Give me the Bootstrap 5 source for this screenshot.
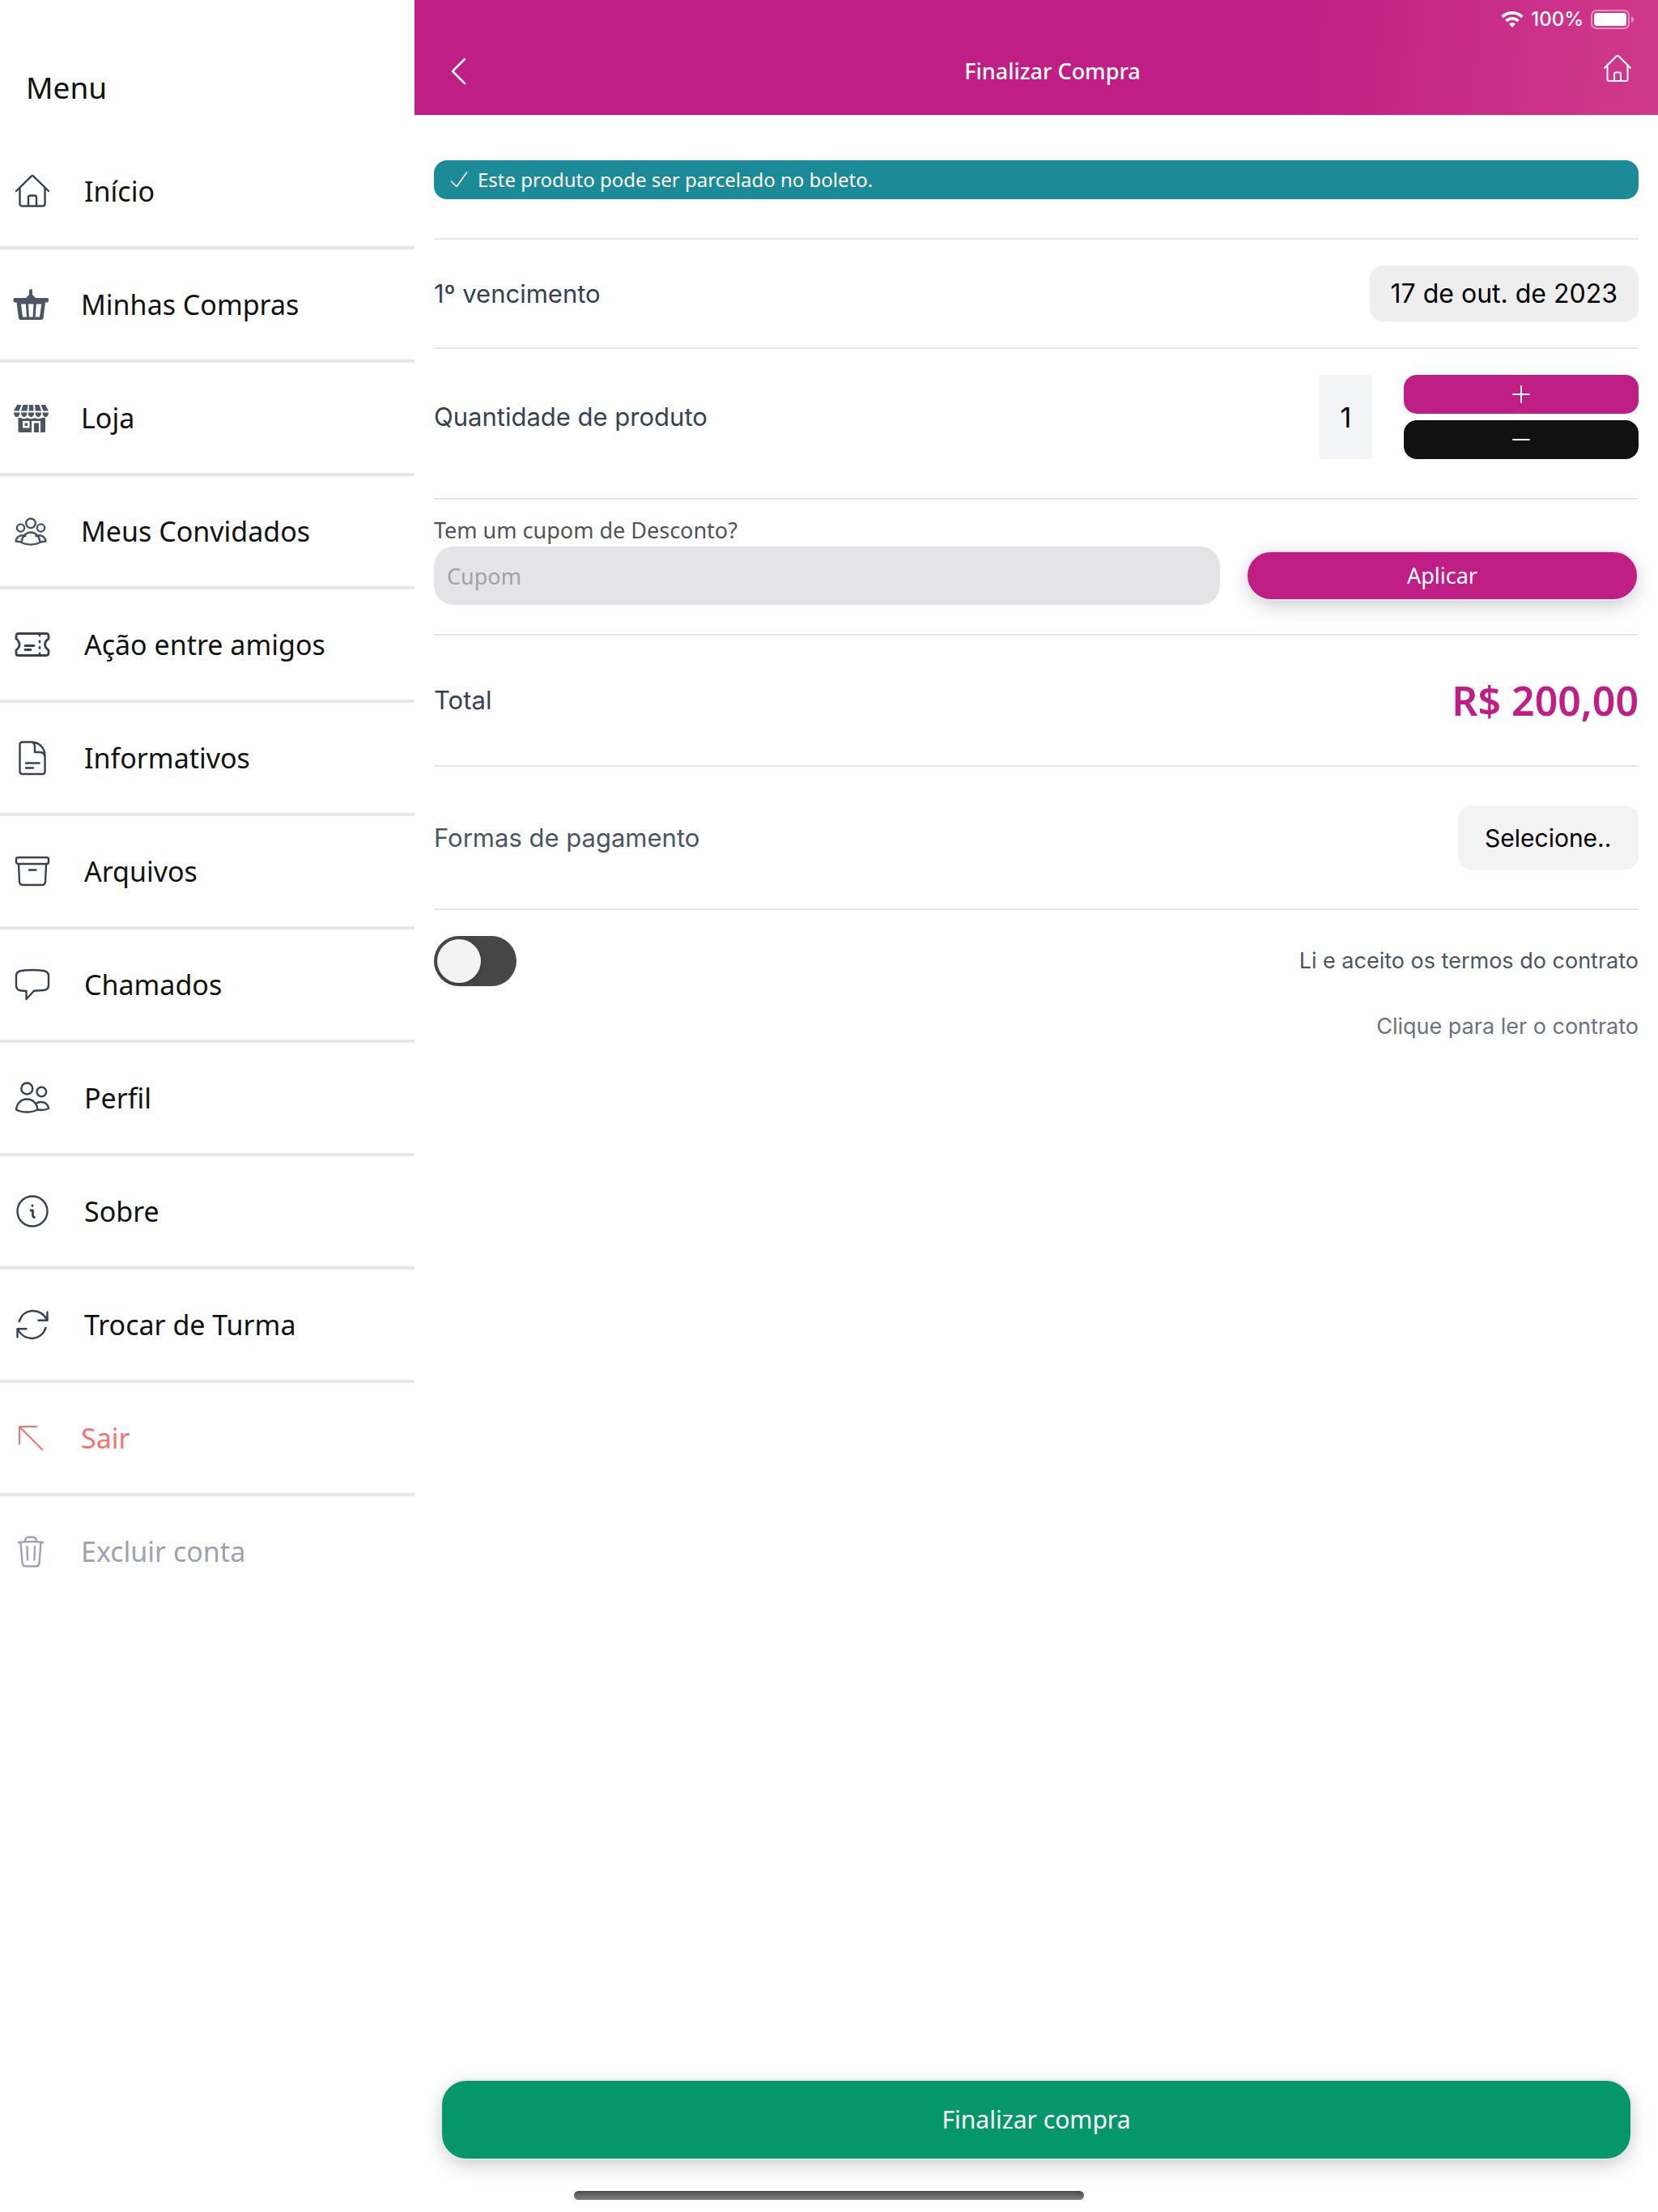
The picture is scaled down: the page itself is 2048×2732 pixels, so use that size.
<!DOCTYPE html>
<html lang="pt-BR">
<head>
<meta charset="utf-8">
<meta name="viewport" content="width=device-width, initial-scale=1">
<title>Finalizar Compra</title>
<link rel="stylesheet" href="https://cdn.jsdelivr.net/npm/bootstrap@5.3.0/dist/css/bootstrap.min.css">
<style>
:root { --brand: #bf1e85; --line: #e5e7eb; --rounded-font: "Noto Sans", sans-serif; --ui-font: Inter, "Liberation Sans", sans-serif; }
body { font-family: var(--ui-font); color: #374151; background: #fff; font-size: 31px; line-height: 44px; }
svg { fill: none; stroke: currentColor; stroke-width: 2; stroke-linecap: round; stroke-linejoin: round; flex-shrink: 0; display: block; }
.solid { fill: currentColor; stroke: none; }

/* Side menu */
.side-menu { width: 25%; font-family: var(--rounded-font); color: #111; }
.side-title { font-size: 37px; line-height: 52px; font-weight: 400; margin: 0; padding: 82px 32px 34px; }
.menu-link { height: 140px; padding: 0 18px 4px; gap: 42px; font-size: 34px; color: #111; text-decoration: none; }
.menu-link svg { width: 44px; height: 44px; color: #374151; stroke-width: 2.4; }
.menu-link.alt { padding-left: 16px; gap: 40px; }
.menu-link.alt svg { color: #4b5563; }
.menu-item:not(:last-child) .menu-link { border-bottom: 4px solid var(--line); padding-bottom: 0; }
.menu-link.leave, .menu-link.alt.leave svg { color: #f87171; }
.menu-link.remove, .menu-link.alt.remove svg { color: #9ca3af; }

/* Header */
.top-bar { height: 142px; color: #fff; background: linear-gradient(95deg, var(--brand) 69%, #d03a8a); }
.status-line { height: 48px; padding: 0 29px; gap: 9px; font-size: 24px; line-height: 24px; font-weight: 500; }
.nav-line { height: 80px; padding: 0 32px 0 44px; }
.nav-line h1 { font-family: var(--rounded-font); font-size: 27px; line-height: 36px; font-weight: 500; margin: 0; }
.icon-btn { background: none; border: 0; color: inherit; padding: 0; }

/* Content */
.notice { margin: 56px 24px 48px; height: 48px; border-radius: 16px; padding: 0 20px; gap: 12px; background: #1c8a97; color: #fff; font-family: var(--rounded-font); font-size: 24px; }
.form-line { margin: 0 24px; border-top: 2px solid var(--line); }
.chip { background: #eee; color: #000; border: 0; border-radius: 16px; }
.date-line { padding: 32px 0; }
.date-chip { height: 69px; padding: 0 26px; font-size: 32px; }
.qty-line { padding: 32px 0 48px; }
.qty-box { width: 65px; height: 104px; border: 0; background: #f3f4f6; color: #000; text-align: center; font-size: 34px; padding: 0; margin-right: 39px; }
.step-btns { width: 290px; }
.step-btn { height: 48px; border: 0; border-radius: 16px; color: #fff; background: var(--brand); }
.step-btn.minus { background: #111; }
.coupon-line { padding: 20px 0 36px; }
.coupon-row { gap: 32px; }
.coupon-label { font-size: 27px; line-height: 36px; color: #52525b; font-family: var(--rounded-font); margin-bottom: 2px; }
.coupon-box { height: 72px; border: 0; border-radius: 24px; background: #e4e4e6; padding: 0 16px; font-size: 27px; font-family: var(--rounded-font); color: #111; min-width: 0; }
.coupon-box::placeholder { color: #a1a1aa; }
.raised { border: 2px solid var(--line); color: #fff; font-family: var(--rounded-font); box-shadow: 0 10px 30px -6px rgba(0,0,0,.2), 0 0 20px rgba(0,0,0,.06); }
.apply-btn { width: 485px; height: 62px; border-radius: 31px; background: var(--brand); font-size: 27px; line-height: 36px; }
.total-line { padding: 50px 0; }
.price { color: var(--brand); font-family: var(--rounded-font); font-size: 50px; line-height: 60px; font-weight: 600; }
.pay-select { height: 79px; padding: 0 33px; background: #f3f3f3; font-size: 30px; appearance: none; }
.soft { color: #4b5563; }
.terms-line { padding: 32px 0; }
.terms-label { font-size: 27px; line-height: 36px; color: #4b5563; }
.terms-link { font-size: 27px; line-height: 36px; color: #6b7280; text-decoration: none; margin-right: 24px; }
.switch-box { appearance: none; width: 102px; height: 62px; border-radius: 31px; background: #474748; margin: 0; display: flex; align-items: center; padding: 0 4px; }
.switch-box::before { content: ""; width: 54px; height: 54px; border-radius: 50%; background: #f2f2f2; box-shadow: 0 4px 8px rgba(0,0,0,.15); }
.switch-box:checked { background: var(--brand); justify-content: flex-end; }
.finish-wrap { padding: 0 32px 64px; }
.finish-btn { height: 100px; border-radius: 32px; background: #059669; font-size: 30px; line-height: 44px; }
.home-bar { position: absolute; left: 50%; bottom: 15px; transform: translateX(-50%); width: 630px; max-width: 60%; height: 11px; border-radius: 6px; background: linear-gradient(#4b4b4b, #808080); }
</style>
</head>
<body>
<div class="d-flex min-vh-100 position-relative">
  <nav class="side-menu flex-shrink-0" aria-label="Menu">
    <h2 class="side-title">Menu</h2>
    <ul class="list-unstyled m-0">
      <li class="menu-item"><a href="#" class="menu-link d-flex align-items-center">
        <svg viewBox="0 0 44 44"><path d="M2 22 20.500 3.800a2.200 2.200 0 0 1 3 0L42 22M6.500 18v20a2.500 2.500 0 0 0 2.500 2.500h26a2.500 2.500 0 0 0 2.500-2.500V18M17 40V30a2.500 2.500 0 0 1 2.500-2.500h5A2.500 2.500 0 0 1 27 30v10"/></svg>Início</a></li>
      <li class="menu-item"><a href="#" class="menu-link alt d-flex align-items-center">
        <svg viewBox="0 0 44 44"><path class="solid" fill-rule="evenodd" d="M20 5a2 2 0 0 1 4 0v5l4 4h14.500a1.500 1.500 0 0 1 1.500 1.500v2a2 2 0 0 1-2 2h-2L37.500 39a2.500 2.500 0 0 1-2.500 2H9.500A2.500 2.500 0 0 1 7 39L4.500 19.500h-2a2 2 0 0 1-2-2v-2A1.500 1.500 0 0 1 2 14h14l4-4zM10 21.500l2 16h5l-1.200-16zM19 21.500l1 16h4.500l1-16zM28.800 21.500l-1.200 16H33l2.200-16z"/></svg>Minhas Compras</a></li>
      <li class="menu-item"><a href="#" class="menu-link alt d-flex align-items-center">
        <svg viewBox="0 0 44 44"><g class="solid"><path d="M5 6h5.500L7.500 13.500H1zM12.500 6h6l-1 7.500h-7.500zM20 6h5l.5 7.500h-6zM27 6h5.500l2.500 7.500h-7.200zM34.500 6H40l4 7.500h-6.500zM1 15.500h7.500a3.700 5.500 0 0 1-7.500 0zM10 15.500h7.500a3.700 5.500 0 0 1-7.500 0zM18.700 15.500h7.500a3.700 5.500 0 0 1-7.500 0zM27.500 15.500h7.500a3.700 5.500 0 0 1-7.500 0zM36.500 15.500H44a3.700 5.500 0 0 1-7.500 0z"/><path fill-rule="evenodd" d="M6.500 22h3q4 2.500 8 0 5 2.500 9.500 0 4.500 2.500 9 0h4v16.500a1.500 1.500 0 0 1-1.500 1.500H34V26H23v14H8a1.500 1.500 0 0 1-1.500-1.500zM12 26v8.500h8.500V26z"/><path d="M14.500 28.500H18V32h-3.500zM26 28.500h6V40h-6z"/></g></svg>Loja</a></li>
      <li class="menu-item"><a href="#" class="menu-link alt d-flex align-items-center">
        <svg viewBox="0 0 44 44"><circle cx="22" cy="12.300" r="5.800"/><circle cx="9.500" cy="18" r="4.600"/><circle cx="34.500" cy="18" r="4.600"/><path d="M10.500 36C11 28.500 16 23.500 22 23.500S33 28.500 33.500 36C27 39.500 17 39.500 10.500 36zM15.500 28C10 26 4.500 28 3.500 34.500q3.500 1 7.500.7M28.500 28c5.500-2 11 0 12 6.500q-3.500 1-7.500.7"/></svg>Meus Convidados</a></li>
      <li class="menu-item"><a href="#" class="menu-link d-flex align-items-center">
        <svg viewBox="0 0 44 44"><path stroke-width="2.800" d="M4.500 8.500h35a2.500 2.500 0 0 1 2.500 2.500v4q-4.500 3-4.500 7t4.500 7v4a2.500 2.500 0 0 1-2.500 2.500h-35A2.500 2.500 0 0 1 2 33v-4q4-3 4-7t-4-7v-4a2.500 2.500 0 0 1 2.500-2.500zM13 23.500h11M13 28.500h7M31 10.500v.5M31 18v1M31 25.500v1M31 33v.5"/></svg>Ação entre amigos</a></li>
      <li class="menu-item"><a href="#" class="menu-link d-flex align-items-center">
        <svg viewBox="0 0 44 44"><path d="M9.500 2.500H21C31 3 37.500 10 37.500 20v19a3 3 0 0 1-3 3h-25a3 3 0 0 1-3-3V5.500a3 3 0 0 1 3-3zM21 2.500q4 1.500 4 6V15h6q5 0 6.500 5M14 28.500h16.500M14 34.500h9"/></svg>Informativos</a></li>
      <li class="menu-item"><a href="#" class="menu-link d-flex align-items-center">
        <svg viewBox="0 0 44 44"><rect x="2" y="5" width="40" height="8" rx="2.500"/><path d="M5 13l1 22a4 4 0 0 0 4 4h24a4 4 0 0 0 4-4l1-22M18 20.500h8.500"/></svg>Arquivos</a></li>
      <li class="menu-item"><a href="#" class="menu-link d-flex align-items-center">
        <svg viewBox="0 0 44 44"><path d="M8 5Q22 3 36 5q6 1 6 6.500v11q0 6-6 6.500l-12 .8L14.500 40V30L8 29.500q-6-.5-6-6.500V11.500Q2 6 8 5z"/></svg>Chamados</a></li>
      <li class="menu-item"><a href="#" class="menu-link d-flex align-items-center">
        <svg viewBox="0 0 44 44"><circle cx="15.300" cy="10.500" r="7"/><circle cx="33.300" cy="14.500" r="5.800"/><path d="M2 36.500C3 28 8.500 23.500 15.300 23.500S27.500 28 28.500 36.500C21 40.500 9 40.500 2 36.500zM26.500 29c6-4.500 14.500-1 15.500 6q-6 3-13 1.500"/></svg>Perfil</a></li>
      <li class="menu-item"><a href="#" class="menu-link d-flex align-items-center">
        <svg viewBox="0 0 44 44"><circle cx="22" cy="22" r="18.500"/><path d="M20 21h2.500v5q0 4 2 3.500M22 15v.4" stroke-width="2.800"/></svg>Sobre</a></li>
      <li class="menu-item"><a href="#" class="menu-link d-flex align-items-center">
        <svg viewBox="0 0 44 44"><path d="M5.700 18C11 2 31 0 40.500 16.500M40.500 6.500v10.200h-11M38.500 26C33 42 13 44 3.500 27.500M3.500 37.500V27.300h11"/></svg>Trocar de Turma</a></li>
      <li class="menu-item"><a href="#" class="menu-link alt leave d-flex align-items-center">
        <svg viewBox="0 0 44 44"><path d="M29.500 8H8v21.500M8 8l28.300 28.500" stroke-width="2"/></svg>Sair</a></li>
      <li class="menu-item"><a href="#" class="menu-link alt remove d-flex align-items-center">
        <svg viewBox="0 0 44 44"><path d="M7 11q15-2 30 0M9.500 11l2 25.500q.5 4 4 4h13q3.500 0 4-4l2-25.500M15 10q0-5.500 4.500-5.500h5Q29 4.500 29 10M17.500 16.500l.5 16M27 16.500l-.5 16"/></svg>Excluir conta</a></li>
    </ul>
  </nav>

  <main class="d-flex flex-column flex-grow-1">
    <header class="top-bar">
      <div class="status-line d-flex align-items-center justify-content-end">
        <svg class="solid" width="28" height="22" viewBox="0 0 28 22"><path d="M14 1c5.200 0 10 2 13.600 5.500L25 9.200a16 16 0 0 0-22 0L.4 6.500A19.500 19.500 0 0 1 14 1zM14 8c3.500 0 6.500 1.300 8.800 3.500L20 14.200a8.800 8.800 0 0 0-12 0l-2.800-2.700A12.500 12.500 0 0 1 14 8zM14 15c1.600 0 3 .6 4 1.600L14 21l-4-4.400q1.600-1.600 4-1.600z"/></svg>
        <span>100%</span>
        <svg width="54" height="24" viewBox="0 0 54 24"><rect x="1" y="1" width="46" height="22" rx="6" stroke-opacity=".45"/><rect class="solid" x="4" y="4" width="40" height="16" rx="3.500"/><path class="solid" fill-opacity=".45" d="M50 8q3 1 3 4t-3 4z"/></svg>
      </div>
      <nav class="nav-line d-flex align-items-center justify-content-between">
        <button class="icon-btn" aria-label="Voltar"><svg width="64" height="36" viewBox="0 0 64 36"><path stroke-width="2.500" d="M18 3 3 18l15 15"/></svg></button>
        <h1>Finalizar Compra</h1>
        <a href="#" class="icon-btn" aria-label="Início"><svg width="36" height="44" viewBox="0 3 36 44"><path d="M2 21 16.500 6.500a2.200 2.200 0 0 1 3 0L34 21M5.500 18v17a2 2 0 0 0 2 2h21a2 2 0 0 0 2-2V18M14 37v-8.500a2 2 0 0 1 2-2h4a2 2 0 0 1 2 2V37"/></svg></a>
      </nav>
    </header>

    <div class="notice d-flex align-items-center" role="status">
      <svg width="22" height="22" viewBox="0 0 22 22"><path d="M1.500 13 8 19.500 20.500 2" stroke-width="1.500"/></svg>
      <span>Este produto pode ser parcelado no boleto.</span>
    </div>

    <section class="form-line date-line d-flex align-items-center justify-content-between">
      <span>1º vencimento</span>
      <button class="chip date-chip">17 de out. de 2023</button>
    </section>

    <section class="form-line qty-line d-flex align-items-center">
      <label for="qty" class="me-auto">Quantidade de produto</label>
      <input id="qty" class="qty-box" value="1">
      <div class="step-btns d-flex flex-column gap-2">
        <button class="step-btn d-flex align-items-center justify-content-center" aria-label="Aumentar"><svg width="24" height="24" viewBox="0 0 24 24"><path d="M2 12h20M12 2v20"/></svg></button>
        <button class="step-btn minus d-flex align-items-center justify-content-center" aria-label="Diminuir"><svg width="24" height="24" viewBox="0 0 24 24"><path d="M2 12h20"/></svg></button>
      </div>
    </section>

    <section class="form-line coupon-line">
      <label for="coupon" class="coupon-label d-block">Tem um cupom de Desconto?</label>
      <div class="coupon-row d-flex align-items-center">
        <input id="coupon" class="coupon-box flex-grow-1" placeholder="Cupom">
        <button class="raised apply-btn">Aplicar</button>
      </div>
    </section>

    <section class="form-line total-line d-flex align-items-center justify-content-between">
      <span>Total</span>
      <strong class="price">R$ 200,00</strong>
    </section>

    <section class="form-line d-flex align-items-center justify-content-between py-5 soft">
      <label for="pay">Formas de pagamento</label>
      <select id="pay" class="chip pay-select"><option>Selecione..</option></select>
    </section>

    <section class="form-line terms-line d-flex align-items-center justify-content-between">
      <input id="terms" type="checkbox" role="switch" class="switch-box">
      <label for="terms" class="terms-label">Li e aceito os termos do contrato</label>
    </section>
    <a href="#" class="terms-link align-self-end">Clique para ler o contrato</a>

    <div class="finish-wrap mt-auto">
      <button class="raised finish-btn w-100">Finalizar compra</button>
    </div>
  </main>
  <div class="home-bar"></div>
</div>
<script src="https://cdn.jsdelivr.net/npm/bootstrap@5.3.0/dist/js/bootstrap.bundle.min.js"></script>
</body>
</html>
